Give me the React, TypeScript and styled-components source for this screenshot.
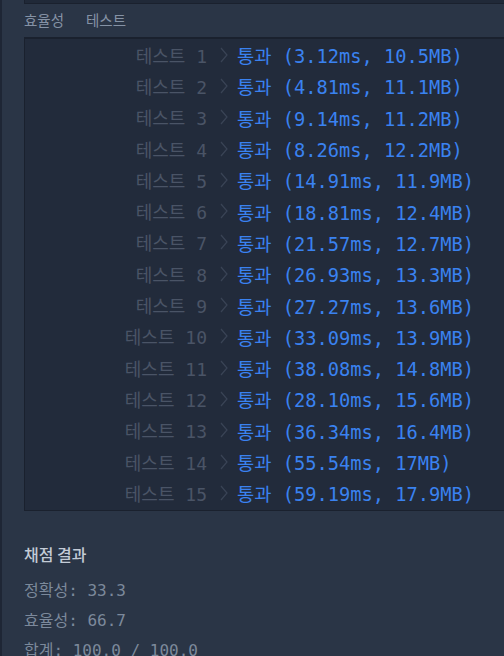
import React from "react";
import styled, { createGlobalStyle } from "styled-components";

const GlobalStyle = createGlobalStyle`
  html, body {
    margin: 0;
    padding: 0;
    background: #2a3546;
    overflow: hidden;
  }
`;

const Page = styled.div`
  display: flex;
  width: 504px;
  height: 656px;
  overflow: hidden;
  background: #2a3546;
  font-family: "DejaVu Sans Mono", "Noto Sans CJK KR", monospace;
`;

const SideStrip = styled.div`
  width: 2px;
  flex-shrink: 0;
  background: #1e2635;
`;

const Content = styled.div`
  flex: 1;
  padding-left: 22px;
  display: flex;
  flex-direction: column;
  min-width: 0;

  & > * {
    flex-shrink: 0;
  }
`;

const TopBox = styled.div`
  height: 3px;
  width: 600px;
  background: #202938;
  border: 1px solid #1a212e;
  border-top: none;
`;

const SectionTitle = styled.div`
  display: flex;
  gap: 22px;
  height: 30px;
  padding-bottom: 3px;
  align-items: center;
  font-family: "Noto Sans CJK KR", sans-serif;
  font-size: 14.5px;
  color: #8592a5;
`;

const Panel = styled.div`
  width: 600px;
  background: #222b3b;
  border: 1px solid #1a212e;
  border-top-width: 2px;
  padding: 0 0 2px;
`;

const Row = styled.div`
  display: grid;
  grid-template-columns: 182px 30px auto;
  height: 31.3px;
  align-items: center;
  font-size: 18px;
  white-space: pre;
`;

const Label = styled.span`
  text-align: right;
  color: #4a5466;
`;

const Chevron = styled.svg`
  justify-self: center;
  width: 8px;
  height: 16px;
  margin-left: 4px;
`;

const Result = styled.span`
  color: #3a82f0;
  font-size: 18.7px;
`;

const Summary = styled.div`
  display: flex;
  flex-direction: column;
  padding-top: 28px;
`;

const SummaryTitle = styled.div`
  height: 30px;
  display: flex;
  align-items: center;
  font-family: "Noto Sans CJK KR", sans-serif;
  font-size: 16px;
  font-weight: 500;
  color: #c3cbd6;
  margin-bottom: 5px;
`;

const SummaryLine = styled.div`
  height: 30px;
  display: flex;
  align-items: center;
  font-size: 16px;
  color: #7c899b;
  white-space: pre;
`;

const results: [string, string][] = [
  ["3.12ms", "10.5MB"],
  ["4.81ms", "11.1MB"],
  ["9.14ms", "11.2MB"],
  ["8.26ms", "12.2MB"],
  ["14.91ms", "11.9MB"],
  ["18.81ms", "12.4MB"],
  ["21.57ms", "12.7MB"],
  ["26.93ms", "13.3MB"],
  ["27.27ms", "13.6MB"],
  ["33.09ms", "13.9MB"],
  ["38.08ms", "14.8MB"],
  ["28.10ms", "15.6MB"],
  ["36.34ms", "16.4MB"],
  ["55.54ms", "17MB"],
  ["59.19ms", "17.9MB"],
];

const App = () => {
  return (
    <>
      <GlobalStyle />
      <Page>
        <SideStrip />
        <Content>
          <TopBox />
          <SectionTitle>
            <span>효율성</span>
            <span>테스트</span>
          </SectionTitle>
          <Panel>
            {results.map(([time, mem], i) => (
              <Row key={i}>
                <Label>테스트 {i + 1}</Label>
                <Chevron viewBox="0 0 8 16">
                  <polyline points="1,1 7,8 1,15" fill="none" stroke="#3a4456" strokeWidth="1.2" />
                </Chevron>
                <Result>통과 ({time}, {mem})</Result>
              </Row>
            ))}
          </Panel>
          <Summary>
            <SummaryTitle>채점 결과</SummaryTitle>
            <SummaryLine>정확성: 33.3</SummaryLine>
            <SummaryLine>효율성: 66.7</SummaryLine>
            <SummaryLine>합계: 100.0 / 100.0</SummaryLine>
          </Summary>
        </Content>
      </Page>
    </>
  );
};

export default App;
